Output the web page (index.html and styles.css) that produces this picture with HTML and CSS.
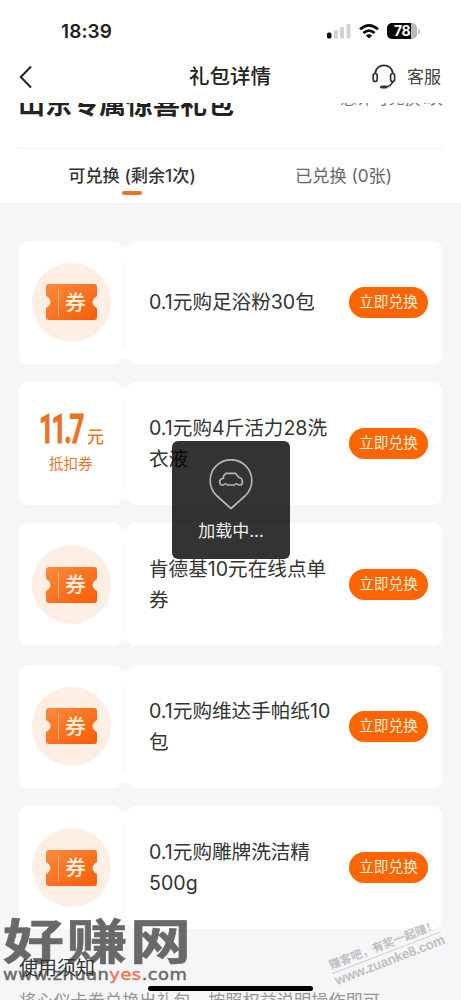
FILE: index.html
```
<!DOCTYPE html>
<html lang="zh-CN">
<head>
<meta charset="utf-8">
<title>礼包详情</title>
<link rel="stylesheet" href="styles.css">
</head>
<body>
<svg width="0" height="0" class="defs" aria-hidden="true">
  <defs>
    <linearGradient id="orange" x1="0" y1="0" x2="1" y2="1"><stop offset="0" stop-color="#fa8a3e"/><stop offset="1" stop-color="#fa5c06"/></linearGradient>
    <symbol id="ticket" viewBox="0 0 51 36"><path fill="url(#orange)" d="M3 0H48Q51 0 51 3V12Q47 14 46.500 18Q47 22 51 24V33Q51 36 48 36H3Q0 36 0 33V24Q4 22 4.500 18Q4 14 0 12V3Q0 0 3 0Z"/><path d="M12.500 5V32" stroke="#ffb27c" stroke-width="1"/></symbol>
  </defs>
</svg>
<div class="screen">
  <header class="header">
    <div class="status">
      <span class="time">18:39</span>
      <svg class="signal" width="25" height="17" viewBox="0 0 25 17"><rect x="0" y="10.500" width="4.500" height="6" rx="1.500" fill="#111"/><g fill="#d2d2d2"><rect x="7" y="8" width="4" height="8.500" rx="1"/><rect x="13" y="5" width="4" height="11.500" rx="1"/><rect x="19.500" y="2" width="4" height="14.500" rx="1"/></g></svg>
      <svg class="wifi" width="20" height="15" viewBox="0 0 20 15"><g fill="none" stroke="#0a0a0a" stroke-width="2.700"><path d="M1 5.300Q10-2.500 19 5.300"/><path d="M4.400 9Q10 4.200 15.600 9"/></g><path d="M6.900 11.400Q10 8.900 13.100 11.400L10 14.600Z" fill="#0a0a0a"/></svg>
      <span class="battery"><span class="level">78</span></span><i class="cap"></i>
    </div>
    <nav class="nav">
      <svg class="back" width="14" height="24" viewBox="0 0 14 24"><path d="M12 1.500L1.800 12L12 22.500" fill="none" stroke="#222" stroke-width="2"/></svg>
      <h1>礼包详情</h1>
      <div class="service">
        <svg width="24" height="25" viewBox="0 0 24 25" fill="none" stroke="#333" stroke-width="1.700"><path d="M3 9.500C4 4 7.500 1.300 12 1.300S20 4 21 9.500M20.800 17.500Q19 22.500 13.500 23"/><rect x="1.200" y="9.500" width="4" height="8" rx="2"/><rect x="18.600" y="9.500" width="4" height="8" rx="2"/><path d="M9.500 23H14" stroke-width="3" stroke-linecap="round"/></svg>
        <span>客服</span>
      </div>
    </nav>
  </header>
  <section class="summary">
    <div class="gift"><h2>山东专属惊喜礼包</h2><span>总计可兑换1次</span></div>
    <div class="tabs"><div class="tab active">可兑换 (剩余1次)</div><div class="tab">已兑换 (0张)</div></div>
  </section>
  <main class="coupons">
    <article class="coupon"><div class="face"><div class="disc"><svg width="51" height="36"><use href="#ticket"/></svg><b>券</b></div></div><div class="info"><p>0.1元购足浴粉30包</p><button>立即兑换</button></div></article>
    <article class="coupon"><div class="face value"><div class="amount"><b>11.7</b><span>元</span></div><small>抵扣券</small></div><div class="info"><p>0.1元购4斤活力28洗<br>衣液</p><button>立即兑换</button></div></article>
    <article class="coupon"><div class="face"><div class="disc"><svg width="51" height="36"><use href="#ticket"/></svg><b>券</b></div></div><div class="info"><p>肯德基10元在线点单<br>券</p><button>立即兑换</button></div></article>
    <article class="coupon"><div class="face"><div class="disc"><svg width="51" height="36"><use href="#ticket"/></svg><b>券</b></div></div><div class="info"><p>0.1元购维达手帕纸10<br>包</p><button>立即兑换</button></div></article>
    <article class="coupon"><div class="face"><div class="disc"><svg width="51" height="36"><use href="#ticket"/></svg><b>券</b></div></div><div class="info"><p>0.1元购雕牌洗洁精<br>500g</p><button>立即兑换</button></div></article>
  </main>
  <section class="notes"><h3>使用须知</h3><p>将心仪卡券兑换出礼包，按照权益说明操作即可</p></section>

  <div class="toast">
    <svg width="44" height="51" viewBox="0 0 44 51" fill="none" stroke="#b4b4b4" stroke-width="1.700" stroke-linejoin="round"><path d="M22 49.500L7.500 36.500A20.800 20.800 0 1 1 36.500 36.500Z"/><path d="M14.500 17L17 14.300H26.500L30 18.500L32.500 19.500Q34.500 24 32 26H29.500Q27.500 23.500 25.500 26H18.500Q16.500 23.500 14.500 26H12Q9.500 23 11.500 20.500L14.500 19Z"/></svg>
    <span>加载中...</span>
  </div>
  <div class="home-bar"></div>
  <div class="logo"><div class="logo-name">好赚网</div><div class="logo-url">www.zhuan<em>yes</em>.com</div></div>
  <div class="stamp"><div class="stamp-name">赚客吧，有奖一起赚！</div><div class="stamp-url">www.zuanke8.com</div></div>
</div>
</body>
</html>
```
FILE: styles.css
```
* { box-sizing: border-box; }
body { margin: 0; font-family: Inter, "Noto Sans CJK SC", sans-serif; color: #333; }
h1, h2, h3, p { margin: 0; }
.defs { position: absolute; }
.screen { position: relative; width: 461px; height: 1000px; overflow: hidden; background: #f5f6f8; }

.header { height: 103px; background: #fff; position: relative; z-index: 2; }
.status { display: flex; align-items: center; height: 51px; padding: 11px 0 0 61px; }
.time { width: 266px; font-size: 19px; font-weight: 600; letter-spacing: .1px; color: #222; }
.signal { margin-bottom: 1px; }
.wifi { margin-left: 7px; }
.battery { width: 30px; height: 16px; margin-left: 8px; border-radius: 5px; overflow: hidden; background: linear-gradient(90deg, #080808 79%, #b8b8b8 79%); }
.level { display: block; text-align: center; font-size: 14px; line-height: 16px; font-weight: 700; color: #fff; letter-spacing: -.5px; }
.cap { width: 2px; height: 5px; margin-left: 1px; border-radius: 0 2px 2px 0; background: #c4c4c4; }
.nav { display: grid; grid-template-columns: 100px 1fr 100px; align-items: center; height: 51px; padding: 0 20px 0 19px; }
.nav h1 { text-align: center; font-size: 20.500px; line-height: 30px; font-weight: 500; color: #222; }
.service { display: flex; align-items: center; gap: 11px; justify-content: flex-end; font-size: 17px; line-height: 24px; color: #444; }

.summary { height: 100px; padding: 0 18px; background: #fff; }
.gift { display: flex; justify-content: space-between; height: 46px; border-bottom: 1px solid #f2f2f2; }
.gift h2 { margin-top: -16px; font-size: 27px; line-height: 36px; font-weight: 600; color: #222; }
.gift span { margin-top: -17px; font-size: 16px; line-height: 24px; color: #777; }
.tabs { display: grid; grid-template-columns: 210px 213px; height: 54px; padding-left: 9px; }
.tab { padding-top: 14px; text-align: center; font-size: 17.200px; line-height: 26px; color: #666; white-space: nowrap; }
.active { color: #333; font-weight: 500; }
.active::after { content: ""; display: block; width: 20px; height: 4px; margin: 2px auto 0; border-radius: 2px; background: #ee7027; }

.coupons { display: flex; flex-direction: column; gap: 18.400px; padding: 37.500px 19px 0; }
.coupon { position: relative; display: flex; height: 123px; flex: none; }
.face { width: 105px; border-radius: 9px; background: #fff; display: flex; align-items: center; padding-left: 13px; }
.info { flex: 1; border-radius: 9px; background: #fff; display: flex; align-items: center; justify-content: space-between; padding: 0 14px 0 25px; }
.coupon::before, .coupon::after { content: ""; position: absolute; left: 99px; width: 13px; height: 9px; background: #f5f6f8; }
.coupon::before { top: -3px; border-radius: 0 0 7px 7px; }
.coupon::after { bottom: -3px; border-radius: 7px 7px 0 0; }
.face::after { content: ""; position: absolute; left: 104px; top: 21px; width: 1px; height: 86px; background: #f1f1f1; }
.disc { position: relative; display: flex; align-items: center; justify-content: center; width: 79px; height: 79px; border-radius: 50%; background: #ffeee4; }
.disc b { position: absolute; left: 33px; top: 25px; font-size: 21px; line-height: 30px; font-weight: 500; color: #fff0df; }
.value { flex-direction: column; align-items: flex-start; padding: 25px 0 0 20px; color: #e87525; }
.amount { display: flex; align-items: baseline; gap: 5px; height: 44px; line-height: 44px; }
.amount b { width: 43px; font: 700 41px/44px Roboto, sans-serif; letter-spacing: -3.500px; -webkit-text-stroke: 1px #e87525; transform: scaleX(.63); transform-origin: 0 50%; white-space: nowrap; }
.amount span { font-size: 17px; font-weight: 500; }
.value small { margin: 1px 0 0 10px; font-size: 14.500px; line-height: 23px; }
.info p { padding-top: 1px; font-size: 19.600px; line-height: 31px; color: #333; white-space: nowrap; }
.info button { flex: none; width: 79px; height: 31px; padding: 0; border: 0; border-radius: 16px; background: #fd6500; color: #fff0d8; font: 400 14.700px/31px Inter, "Noto Sans CJK SC", sans-serif; }

.notes { position: relative; z-index: 1; padding: 24px 19px 0; white-space: nowrap; }
.notes h3 { font-size: 19px; line-height: 31px; font-weight: 400; color: #333; }
.notes p { margin-top: 4px; font-size: 17.200px; line-height: 25px; color: #969696; }

.toast { position: absolute; left: 172px; top: 441px; width: 118px; height: 118px; border-radius: 6px; background: rgba(0, 0, 0, .8); display: flex; flex-direction: column; align-items: center; padding-top: 18px; color: #eee; font-size: 17px; line-height: 26px; }
.toast span { margin-top: 8px; }
.home-bar { position: absolute; z-index: 2; left: 148px; top: 986px; width: 165px; height: 5px; border-radius: 3px; background: #000; }
.logo { position: absolute; left: 3px; top: 913px; color: #696969; white-space: nowrap; }
.logo-name { height: 54px; font-size: 48px; line-height: 58px; font-weight: 700; letter-spacing: 2px; -webkit-text-stroke: .6px currentColor; transform: scaleX(1.27); transform-origin: 0 0; }
.logo-url { font: 400 15px/16px "DejaVu Sans", sans-serif; letter-spacing: .4px; -webkit-text-stroke: .4px currentColor; transform: scaleX(1.19); transform-origin: 0 0; }
.logo-url em { font-style: normal; color: #ef7355; }
.stamp { position: absolute; left: 327px; top: 959px; color: #bfc0c3; white-space: nowrap; transform: rotate(-21deg); transform-origin: 0 0; }
.stamp-name { width: 116px; border-bottom: 1px solid #cecfd2; font-size: 11.500px; line-height: 15px; font-weight: 700; }
.stamp-url { font: 700 13.500px/15px "Liberation Sans", sans-serif; letter-spacing: -.2px; }
```
